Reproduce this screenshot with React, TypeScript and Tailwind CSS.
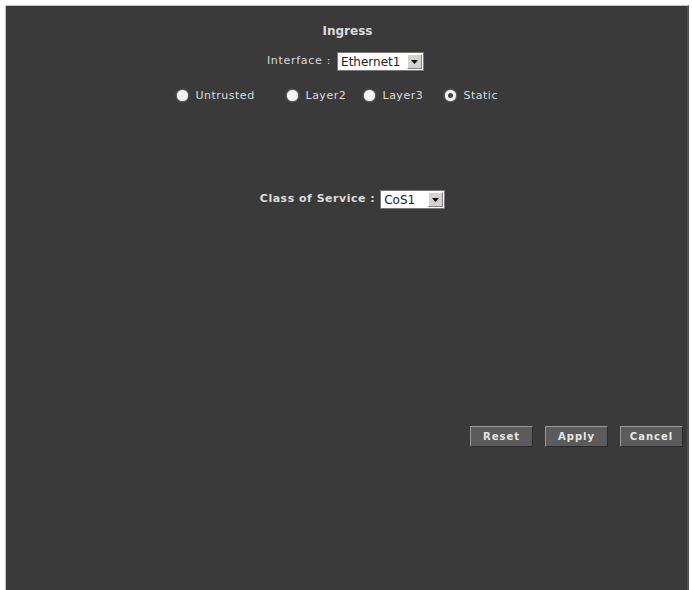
import React, { useState } from "react";

const font = { fontFamily: '"DejaVu Sans", Verdana, sans-serif' };

interface SelectProps {
  value: string;
  width: string;
}

// old-style dropdown box with the little grey arrow button
const DropBox = ({ value, width }: SelectProps) => {
  return (
    <div
      className={`flex items-center h-[19px] bg-white border border-[#7a7a7a] ${width}`}
    >
      <span className="flex-1 pl-[3px] text-[12px] leading-none text-[#222]">
        {value}
      </span>
      <span className="flex items-center justify-center w-[15px] h-[15px] mr-[1px] bg-[#d6d3ce] border-t border-l border-white border-r border-b border-r-[#808080] border-b-[#808080]">
        <svg width="7" height="4" viewBox="0 0 7 4">
          <path d="M0 0h7L3.5 4z" fill="#111" />
        </svg>
      </span>
    </div>
  );
};

const Radio = ({ checked }: { checked?: boolean }) => {
  return (
    <span className="flex items-center justify-center w-[11px] h-[11px] rounded-full bg-[#f2f2f2] shadow-[0_0_2px_#ddd]">
      {checked && <span className="w-[5px] h-[5px] rounded-full bg-[#444]" />}
    </span>
  );
};

const Button = ({ label }: { label: string }) => {
  return (
    <button
      type="button"
      className="w-[63px] h-[21px] bg-[#5b5b5b] border border-t-[#9a9a9a] border-l-[#9a9a9a] border-r-[#2a2a2a] border-b-[#2a2a2a] text-[10px] font-bold tracking-[1px] text-[#e6e6e6]"
    >
      {label}
    </button>
  );
};

const App = () => {
  const [mode] = useState("static");

  const options = [
    { id: "untrusted", label: "Untrusted", w: "w-[110px]" },
    { id: "layer2", label: "Layer2", w: "w-[77px]" },
    { id: "layer3", label: "Layer3", w: "w-[81px]" },
    { id: "static", label: "Static", w: "w-[58px]" },
  ];

  return (
    <div className="w-[692px] h-[590px] bg-white pt-[5px] pl-[5px]" style={font}>
      <div className="w-[684px] h-[585px] bg-[#3a3a3a] border-t border-l border-[#c4c4c4] border-r-2 border-r-[#505050] flex flex-col items-center text-[#dcdcdc]">
        <h1 className="mt-[18px] ml-[2px] text-[12px] font-bold leading-[14px]">
          Ingress
        </h1>

        <div className="mt-[14px] flex items-center gap-[6px] ml-[-2px]">
          <span className="text-[11px] tracking-[0.7px]">Interface :</span>
          <DropBox value="Ethernet1" width="w-[87px]" />
        </div>

        <div className="mt-[19px] flex items-center mr-[14px]">
          {options.map((o) => (
            <label key={o.id} className={`flex items-center gap-[8px] ${o.w}`}>
              <Radio checked={mode === o.id} />
              <span className="text-[11px] leading-none tracking-[0.5px]">
                {o.label}
              </span>
            </label>
          ))}
        </div>

        <div className="mt-[89px] flex items-center gap-[5px] ml-[12px]">
          <span className="text-[11px] font-bold tracking-[0.5px]">
            Class of Service :
          </span>
          <DropBox value="CoS1" width="w-[65px]" />
        </div>

        <div className="mt-[217px] self-stretch flex justify-end gap-[12px] pr-[4px]">
          <Button label="Reset" />
          <Button label="Apply" />
          <Button label="Cancel" />
        </div>
      </div>
    </div>
  );
};

export default App;
